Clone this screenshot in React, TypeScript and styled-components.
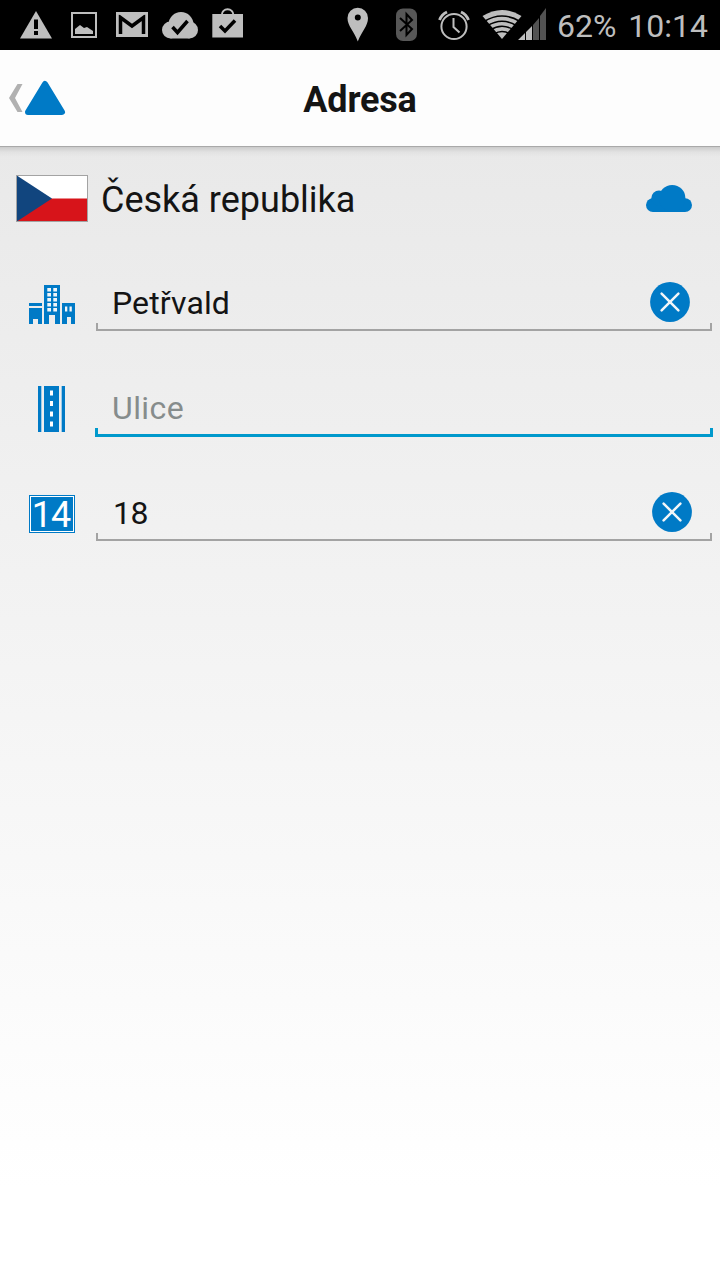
import React from 'react';
import styled, { createGlobalStyle } from 'styled-components';

const BLUE = '#007ac6';
const GREY = '#bebebe';

const GlobalStyle = createGlobalStyle`
  body { margin: 0; font-family: Roboto, sans-serif; color: #141414; }
  svg { display: block; flex: none; }
`;

const Screen = styled.div`
  width: 720px;
  height: 1280px;
  display: flex;
  flex-direction: column;
  overflow: hidden;
`;

const StatusBar = styled.div`
  height: 50px;
  box-sizing: border-box;
  padding: 0 12px 0 20px;
  background: #000;
  display: flex;
  align-items: flex-start;
  justify-content: space-between;
`;

const StatusGroup = styled.div`
  display: flex;
  align-items: flex-start;
`;

const StatusText = styled.span<{ $gap: number }>`
  margin-left: ${p => p.$gap}px;
  font-size: 32px;
  line-height: 38px;
  padding-top: 7px;
  color: ${GREY};
`;

const Header = styled.header`
  height: 96px;
  background: #fdfdfd;
  border-bottom: 1px solid #a9a9a9;
  display: grid;
  grid-template-columns: 80px 1fr 80px;
  align-items: center;
`;

const BackLink = styled.a`
  display: flex;
  padding: 4px 0 0 8px;
`;

const Title = styled.h1`
  margin: 4px 0 0;
  text-align: center;
  font-size: 36px;
  line-height: 42px;
  font-weight: 700;
  letter-spacing: -0.2px;
`;

const Form = styled.main`
  flex: 1;
  background:
    linear-gradient(rgba(0, 0, 0, 0.13), rgba(0, 0, 0, 0.03) 5px, transparent 10px),
    linear-gradient(#e9e9e9, #ffffff 92%);
`;

const CountryRow = styled.div`
  height: 79px;
  box-sizing: border-box;
  padding: 28px 28px 0 16px;
  display: flex;
  align-items: flex-start;
`;

const CountryName = styled.span`
  flex: 1;
  margin-left: 13px;
  padding-top: 4px;
  font-size: 36px;
  line-height: 42px;
`;

const CloudSlot = styled.div`
  padding-top: 10px;
`;

const FieldRow = styled.div`
  height: 105px;
  box-sizing: border-box;
  padding: 55px 8px 0 0;
  display: flex;
`;

const IconSlot = styled.div<{ $top: number }>`
  width: 96px;
  box-sizing: border-box;
  padding: ${p => p.$top}px 0 0 29px;
`;

const Field = styled.div`
  flex: 1;
  display: flex;
  flex-direction: column;
`;

const FieldContent = styled.div<{ $end: number }>`
  height: 42px;
  box-sizing: border-box;
  padding: 1px ${p => p.$end}px 0 16px;
  display: flex;
  align-items: flex-start;
`;

const FieldValue = styled.span<{ $muted?: boolean; $indent?: number; $spacing?: number }>`
  flex: 1;
  padding: 2px 0 0 ${p => p.$indent ?? 0}px;
  font-size: 32px;
  line-height: 38px;
  letter-spacing: ${p => p.$spacing ?? 0}px;
  color: ${p => (p.$muted ? '#868c8c' : '#141414')};
`;

const Underline = styled.div<{ $focused?: boolean }>`
  box-sizing: border-box;
  height: ${p => (p.$focused ? 9 : 8)}px;
  margin: ${p => (p.$focused ? '0 -1px -1px' : '0')};
  border: solid ${p => (p.$focused ? '#0099cc' : '#a3a3a3')};
  border-width: ${p => (p.$focused ? '0 3px 3px' : '0 2px 2px')};
`;

const ClearButton = styled.button`
  width: 40px;
  height: 40px;
  padding: 0;
  border: 0;
  background: none;
`;

const NumberPlate = styled.div`
  width: 46px;
  height: 38px;
  box-sizing: border-box;
  border: 1px solid ${BLUE};
  padding: 1px;
  background: #fff;
`;

const PlateFace = styled.div`
  width: 42px;
  height: 34px;
  background: ${BLUE};
  color: #fff;
  text-align: center;
  font-size: 36px;
  line-height: 36px;
  letter-spacing: -1px;
  text-indent: -2px;
`;

const Notifications = () => (
  <svg width="230" height="50" viewBox="20 0 230 50" fill={GREY}>
    <path d="M36 11 52 38.500H20z" />
    <path d="M34 19.500h4V29h-4zM34 31h4v4h-4z" fill="#000" />
    <path d="M71 12h26v26H71zM73 14v22h22V14z" fillRule="evenodd" />
    <path d="M75 34v-5l5-4 4 3 3-1 6 4v3z" />
    <path d="M116 12h32v25h-32z" />
    <path d="M120.500 34V17.500L132 26l11.500-8.500V34" fill="none" stroke="#000" strokeWidth="3.500" />
    <path d="M117 13.500h30" stroke={GREY} strokeWidth="2.500" />
    <circle cx="181" cy="24.500" r="12.500" />
    <circle cx="170.500" cy="30" r="8.500" />
    <circle cx="189.500" cy="30" r="8.500" />
    <path d="M170.500 28h19v10.500h-19z" />
    <path d="M172.500 27l5 5.500 10-11.500" fill="none" stroke="#000" strokeWidth="3.500" />
    <path d="M212.300 14H243v23.500h-30.700z" />
    <path d="M221.800 15a5.800 5.800 0 0 1 11.600 0" fill="none" stroke={GREY} strokeWidth="2" />
    <path d="M220 26l5 5 10-10.500" fill="none" stroke="#000" strokeWidth="3.500" />
  </svg>
);

const SystemIcons = () => (
  <svg width="200" height="50" viewBox="347 0 200 50" fill={GREY}>
    <path d="M347.500 18a10.200 10.200 0 0 1 20.500 0c0 8-6 13-10.200 23.500C354 31 347.500 26 347.500 18zM354.800 17.500a3 3 0 1 0 6 0a3 3 0 1 0-6 0z" fillRule="evenodd" />
    <rect x="396" y="8.500" width="21" height="32.500" rx="7" fill="#575757" />
    <path d="M400 18l12 11-5.500 6V14l5.500 6-12 11" fill="none" stroke="#000" strokeWidth="2" />
    <g fill="none" stroke={GREY} strokeWidth="2">
      <circle cx="454" cy="26.500" r="12.600" />
      <path d="M453.500 18v9l6 5.500" />
      <path d="M439.500 20q2-5.500 7.500-8M461 12q5.500 2.500 7.500 8" strokeWidth="2.800" />
    </g>
    <path d="M502 39 482.500 16Q502 4 521.500 16z" />
    <g fill="none" stroke="#000" strokeWidth="1.500">
      <path d="M484 21.500Q502 10.500 520 21.500M487 26Q502 16.500 517 26M490 30Q502 22.500 514 30M494 34Q502 29 510 34" />
    </g>
    <path d="M518 40l7-7v7zM526 32l6-6v14h-6z" />
    <path d="M533 25l6-7v22h-6zM540 16l6-8v32h-6z" fill="#525252" />
  </svg>
);

const BackIcon = () => (
  <svg width="60" height="40" viewBox="8 80 60 40">
    <path d="M17.500 84H22.500L15 98l7.500 14H17.500L9 98z" fill="#b1b1b1" />
    <path d="M45 84 62 112H28z" fill={BLUE} stroke={BLUE} strokeWidth="6" strokeLinejoin="round" />
  </svg>
);

const Flag = () => (
  <svg width="72" height="47" viewBox="0 0 72 47">
    <path d="M0 0h72v24H0z" fill="#fff" />
    <path d="M0 23.500h72V47H0z" fill="#d7141a" />
    <path d="M0 0l36 23.500L0 47z" fill="#11457e" />
    <rect x=".5" y=".5" width="71" height="46" fill="none" stroke="#a3a3a3" />
  </svg>
);

const Cloud = () => (
  <svg width="46" height="27" viewBox="0 0 46 27" fill={BLUE}>
    <rect y="13.200" width="46" height="13.800" rx="6.900" />
    <circle cx="13" cy="13.200" r="7.700" />
    <circle cx="26.200" cy="13.200" r="13.200" />
  </svg>
);

const CityIcon = () => (
  <svg width="46" height="39" viewBox="0 0 46 39" fill={BLUE}>
    <path d="M0 18h13v3H0zM0 23h13v16H9v-5H4v5H0z" />
    <path d="M15 0h16v39h-5v-9h-6v9h-5z" />
    <path d="M33 18h13v21h-4v-7h-4v7h-5z" />
    <g fill="#f2f6f9">
      {[3, 8, 13, 18, 23].map(y => (
        <path key={y} d={`M18.300 ${y}h3.700v3.500h-3.700zM24.300 ${y}H28v3.500h-3.700z`} />
      ))}
      <path d="M36 21.500h2.300v5H36zM40.500 21.500h2.300v5h-2.300z" />
    </g>
  </svg>
);

const RoadIcon = () => (
  <svg width="46" height="46" viewBox="0 0 46 46">
    <path d="M9 0h3v46H9zM15 0h15v46H15zM33 0h3v46h-3z" fill={BLUE} />
    <path d="M12 0h1v46h-1zM32 0h1v46h-1z" fill="#9fcbe7" />
    <path d="M21 4.500h3V9.500h-3zM21 15h3v5h-3zM21 25.500h3v5h-3zM21 35.500h3v5h-3z" fill="#fff" />
  </svg>
);

const Clear = () => (
  <ClearButton aria-label="Clear">
    <svg width="40" height="40" viewBox="0 0 40 40">
      <circle cx="20" cy="20" r="19.900" fill={BLUE} />
      <path d="M11.600 11.600l16.800 16.800M28.400 11.600l-16.800 16.800" stroke="#f3f6f8" strokeWidth="2.500" strokeLinecap="round" />
    </svg>
  </ClearButton>
);

export default function App() {
  return (
    <Screen>
      <GlobalStyle />
      <StatusBar>
        <Notifications />
        <StatusGroup>
          <SystemIcons />
          <StatusText $gap={10}>62%</StatusText>
          <StatusText $gap={12}>10:14</StatusText>
        </StatusGroup>
      </StatusBar>
      <Header>
        <BackLink><BackIcon /></BackLink>
        <Title>Adresa</Title>
      </Header>
      <Form>
        <CountryRow>
          <Flag />
          <CountryName>Česká republika</CountryName>
          <CloudSlot><Cloud /></CloudSlot>
        </CountryRow>
        <FieldRow>
          <IconSlot $top={4}><CityIcon /></IconSlot>
          <Field>
            <FieldContent $end={22}>
              <FieldValue $spacing={0.12}>Petřvald</FieldValue>
              <Clear />
            </FieldContent>
            <Underline />
          </Field>
        </FieldRow>
        <FieldRow>
          <IconSlot $top={0}><RoadIcon /></IconSlot>
          <Field>
            <FieldContent $end={22}>
              <FieldValue $muted $spacing={0.4}>Ulice</FieldValue>
            </FieldContent>
            <Underline $focused />
          </Field>
        </FieldRow>
        <FieldRow>
          <IconSlot $top={4}>
            <NumberPlate><PlateFace>14</PlateFace></NumberPlate>
          </IconSlot>
          <Field>
            <FieldContent $end={20}>
              <FieldValue $indent={1} $spacing={-0.6}>18</FieldValue>
              <Clear />
            </FieldContent>
            <Underline />
          </Field>
        </FieldRow>
      </Form>
    </Screen>
  );
}
